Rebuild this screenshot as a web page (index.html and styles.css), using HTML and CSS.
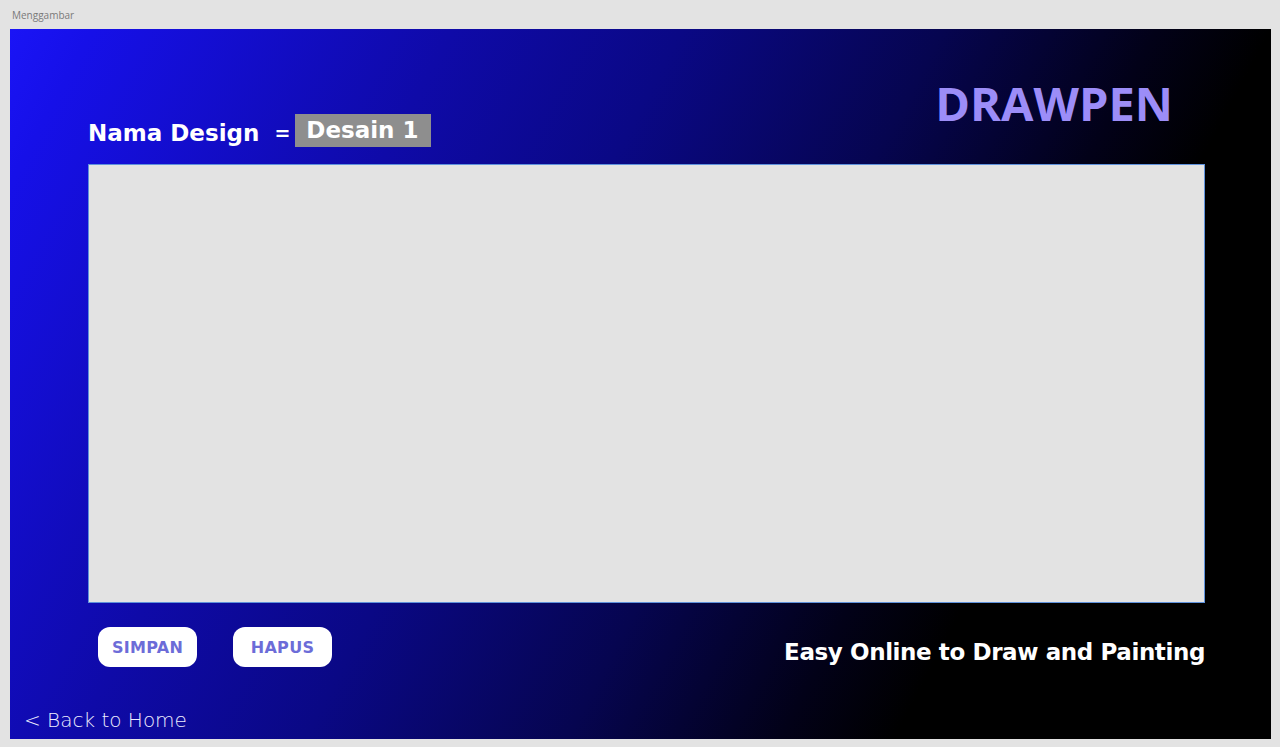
FILE: index.html
```html
<!DOCTYPE html>
<html lang="id">
<head>
<meta charset="utf-8">
<title>Menggambar</title>
<link rel="stylesheet" href="styles.css">
</head>
<body>
  <div class="page-label">Menggambar</div>
  <div class="frame">
    <div class="main">
      <header class="header">
        <div class="name-row">
          <span class="name-label">Nama Design</span>
          <span class="eq">=</span>
          <span class="name-input">Desain 1</span>
        </div>
        <div class="brand">DRAWPEN</div>
      </header>
      <div class="canvas"></div>
      <div class="footer">
        <div class="actions">
          <button class="btn">SIMPAN</button>
          <button class="btn">HAPUS</button>
        </div>
        <div class="tagline">Easy Online to Draw and Painting</div>
      </div>
    </div>
    <div class="back">&lt; Back to Home</div>
  </div>
</body>
</html>
```

FILE: styles.css
```css
html, body {
  margin: 0;
  padding: 0;
}
body {
  background: #e3e3e3;
  width: 1280px;
  height: 747px;
  overflow: hidden;
  font-family: "DejaVu Sans", sans-serif;
}
.page-label {
  height: 29px;
  box-sizing: border-box;
  padding: 8px 0 0 12px;
  font-family: "Open Sans", sans-serif;
  font-size: 10px;
  color: #7a7a7a;
}
.frame {
  margin-left: 10px;
  width: 1261px;
  height: 710px;
  box-sizing: border-box;
  background: linear-gradient(118deg, #1a14f6 0%, #1610e8 5%, #0f0aa8 27%, #0a0885 41%, #060550 57%, #020118 70%, #000 77%);
  display: flex;
  flex-direction: column;
}
.main {
  padding: 0 66px 0 78px;
}
.header {
  height: 135px;
  display: flex;
  justify-content: space-between;
  align-items: flex-start;
}
.name-row {
  align-self: flex-end;
  margin-bottom: 17px;
  display: flex;
  align-items: center;
  color: #fff;
  font-weight: bold;
  font-size: 23px;
}
.name-label {
  position: relative;
  top: 2px;
}
.eq {
  margin-left: 15px;
  margin-right: 5px;
  font-size: 19px;
  position: relative;
  top: 2px;
}
.name-input {
  background: #8e8e8e;
  width: 136px;
  height: 33px;
  box-sizing: border-box;
  padding-left: 11px;
  line-height: 33px;
}
.brand {
  margin-top: 51px;
  margin-right: 32px;
  font-family: "Open Sans", sans-serif;
  font-weight: 700;
  font-size: 47px;
  line-height: 1;
  color: #9c8df8;
}
.canvas {
  height: 439px;
  box-sizing: border-box;
  background: #e3e3e3;
  border: 1px solid #5f92dc;
}
.footer {
  margin-top: 24px;
  display: flex;
  justify-content: space-between;
  align-items: center;
}
.actions {
  display: flex;
  gap: 36px;
  margin-left: 10px;
}
.btn {
  width: 99px;
  height: 40px;
  border: none;
  border-radius: 12px;
  background: #fff;
  color: #6c6cd8;
  font-family: "DejaVu Sans", sans-serif;
  font-weight: bold;
  font-size: 16px;
  letter-spacing: 0.3px;
  padding: 0;
}
.tagline {
  color: #fff;
  font-weight: bold;
  font-size: 23px;
  letter-spacing: -0.4px;
  margin-top: 10px;
}
.back {
  margin-top: auto;
  padding: 0 0 7px 14px;
  color: #eef;
  font-size: 20px;
  font-weight: 200;
}
```
